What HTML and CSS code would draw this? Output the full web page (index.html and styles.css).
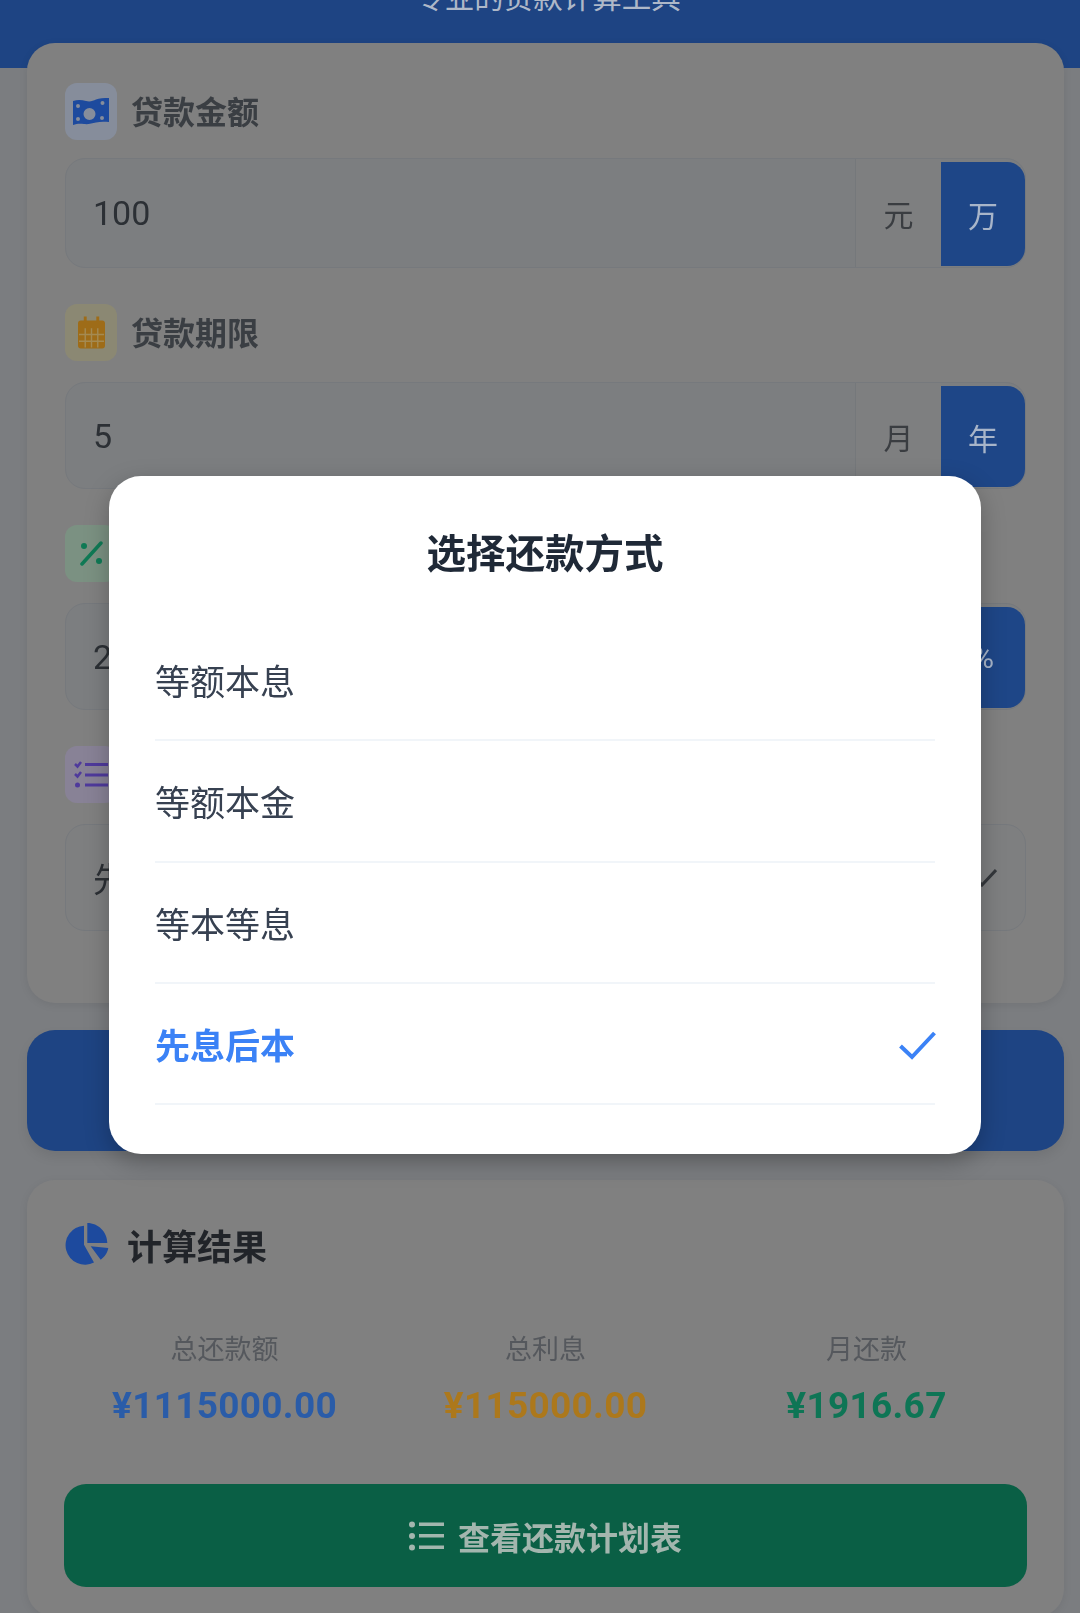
FILE: index.html
```html
<!DOCTYPE html>
<html lang="zh-CN">
<head>
  <meta charset="UTF-8">
  <title>贷款计算器</title>
  <link rel="stylesheet" href="styles.css">
</head>
<body>

  <header class="topbar">
    <p class="subtitle">专业的贷款计算工具</p>
  </header>

  <main class="page">
    <section class="card form">

      <div class="field first">
        <div class="label">
          <span class="badge badge-blue">
            <svg class="icon-money" viewBox="0 0 36 27"><path fill-rule="evenodd" fill="#1d4a9e" d="M0 3c5-1.500 9-1 13 0s7 0 10-1.500S31 0 36 0v24c-5-.5-9-.5-13 .5s-8 2-12 1.500-7-.5-11 1zM16.500 10a6 6 0 1 0 0 12 6 6 0 0 0 0-12zM5 6a2 2 0 1 0 0 4 2 2 0 0 0 0-4zm24 12a2 2 0 1 0 0 4 2 2 0 0 0 0-4zM29.500 3a2 2 0 1 0 0 4 2 2 0 0 0 0-4zM5 19a2 2 0 1 0 0 4 2 2 0 0 0 0-4z"/></svg>
          </span>
          <span class="label-text">贷款金额</span>
        </div>
        <div class="input">
          <span class="value">100</span>
          <span class="unit">元</span>
          <span class="unit on">万</span>
        </div>
      </div>

      <div class="field">
        <div class="label">
          <span class="badge badge-amber">
            <svg class="icon-cal" viewBox="0 0 28 33"><path fill="#9e6c18" d="M6 0h3v4h10V0h3v4h3a3 3 0 0 1 3 3v4H0V7a3 3 0 0 1 3-3h3zM0 11h28v19a3 3 0 0 1-3 3H3a3 3 0 0 1-3-3z"/><path stroke="#a48a52" stroke-width="1.500" d="M7.500 12v20M14 12v20M20.500 12v20M1 18.500h26M1 25.500h26"/></svg>
          </span>
          <span class="label-text">贷款期限</span>
        </div>
        <div class="input">
          <span class="value">5</span>
          <span class="unit">月</span>
          <span class="unit on">年</span>
        </div>
      </div>

      <div class="field">
        <div class="label">
          <span class="badge badge-green">
            <svg class="icon-pct" viewBox="0 0 25 25"><path stroke="#0f7a55" stroke-width="3.500" stroke-linecap="round" d="M22 2 3 23"/><circle cx="5" cy="5" r="3" fill="#0f7a55"/><circle cx="20" cy="20" r="3" fill="#0f7a55"/></svg>
          </span>
          <span class="label-text">年利率</span>
        </div>
        <div class="input">
          <span class="value">2.3</span>
          <span class="unit">‰</span>
          <span class="unit on">%</span>
        </div>
      </div>

      <div class="field">
        <div class="label">
          <span class="badge badge-purple">
            <svg class="icon-tasks" viewBox="0 0 34 27"><path fill="none" stroke="#4f3a9c" stroke-width="2.500" d="M1 3l2.500 2.500L7 1M1 13l2.500 2.500L7 11"/><circle cx="3.500" cy="24" r="2.500" fill="#4f3a9c"/><path stroke="#4f3a9c" stroke-width="3" d="M11 3.500h23M11 14h23M11 24h23"/></svg>
          </span>
          <span class="label-text">还款方式</span>
        </div>
        <div class="input select">
          <span class="value">先息后本</span>
          <svg class="chevron" viewBox="0 0 30 18"><path fill="none" stroke="#34373b" stroke-width="3" d="M1 1l14 15L29 1"/></svg>
        </div>
      </div>

    </section>

    <button class="calc">开始计算</button>

    <section class="card result">
      <div class="result-head">
        <svg class="icon-pie" viewBox="0 0 44 44"><path fill="#1d4a9e" d="M19 2.700a19.500 19.500 0 1 0 10 36.800L19 21.700zM22.300 0v20h20C42.300 9 33.300 0 22.300 0zM25.700 23.300l17.600 1.700c-.7 4.500-3.600 9-7.600 11.700z"/></svg>
        计算结果
      </div>
      <div class="stats">
        <div class="stat">
          <div class="stat-name">总还款额</div>
          <div class="stat-num num-blue">¥1115000.00</div>
        </div>
        <div class="stat">
          <div class="stat-name">总利息</div>
          <div class="stat-num num-amber">¥115000.00</div>
        </div>
        <div class="stat">
          <div class="stat-name">月还款</div>
          <div class="stat-num num-green">¥1916.67</div>
        </div>
      </div>
      <button class="plan">
        <svg class="icon-list" viewBox="0 0 35 30"><g fill="#a3b6ae"><circle cx="3" cy="3.500" r="3"/><circle cx="3" cy="15" r="3"/><circle cx="3" cy="26.500" r="3"/><rect x="10" y="1.500" width="25" height="3.500"/><rect x="10" y="13" width="25" height="3.500"/><rect x="10" y="24.500" width="25" height="3.500"/></g></svg>
        查看还款计划表
      </button>
    </section>
  </main>

  <!-- repayment picker, sits over the dimmed page -->
  <div class="modal">
    <h2 class="modal-title">选择还款方式</h2>
    <div class="option">等额本息</div>
    <div class="option">等额本金</div>
    <div class="option">等本等息</div>
    <div class="option picked">
      先息后本
      <svg class="check" viewBox="0 0 37 29"><path fill="none" stroke="#3b82f6" stroke-width="4" d="M1.500 15 13 26 35.500 2"/></svg>
    </div>
  </div>

</body>
</html>
```

FILE: styles.css
```css
/* colours below are already dimmed, the reference is behind a dark backdrop */
body {
  margin: 0;
  height: 1613px;
  overflow: hidden;
  position: relative;
  background-color: #7b7d80;
  color: #2f3338;
  font-family: Roboto, "Noto Sans CJK SC", sans-serif;
}

.topbar {
  height: 68px;
  background-color: #1e4483;
  display: flex;
  align-items: flex-end;
  justify-content: center;
  overflow: hidden;
}

.subtitle {
  margin: 0 0 53px;
  padding-left: 16px;
  font-size: 29.5px;
  line-height: 34px;
  color: #aeb8c8;
  white-space: nowrap;
}

.page {
  margin-top: -25px;
  padding: 0 16px 0 27px;
  display: flex;
  flex-direction: column;
  filter: blur(0.6px);
}

.card {
  position: relative;
  background-color: #808080;
  border-radius: 28px;
  box-shadow: 0 2px 8px rgba(0, 0, 0, 0.08);
}

.form {
  padding: 40px 38px 72px;
  display: flex;
  flex-direction: column;
  gap: 36px;
}

.field {
  display: flex;
  flex-direction: column;
  gap: 21px;
}

.label {
  display: flex;
  align-items: center;
  gap: 14px;
  font-size: 32px;
  font-weight: 700;
  color: #3a3e43;
}

.label-text {
  margin-top: -4px;
}

.badge {
  width: 52px;
  height: 57px;
  border-radius: 12px;
  display: flex;
  align-items: center;
  justify-content: center;
  flex: none;
}

.badge-blue { background-color: #868d9b; }
.badge-amber { background-color: #8b8873; }
.badge-green { background-color: #7b9182; }
.badge-purple { background-color: #888296; }

.icon-money { width: 36px; height: 27px; }
.icon-cal { width: 27px; height: 33px; }
.icon-pct { width: 25px; height: 25px; }
.icon-tasks { width: 34px; height: 27px; }

.input {
  height: 107px;
  box-sizing: border-box;
  border: 1px solid #76797d;
  border-radius: 20px;
  background-color: #7c7e80;
  display: flex;
  align-items: stretch;
}

/* first box sits a bit higher and taller in the reference */
.first {
  gap: 18px;
}

.first .input {
  height: 110px;
}

.value {
  flex: 1;
  padding-left: 27px;
  display: flex;
  align-items: center;
  font-size: 34px;
  color: #2c3035;
}

.unit {
  width: 85px;
  display: flex;
  align-items: center;
  justify-content: center;
  font-size: 30px;
  color: #3a3d41;
  border-left: 1px solid #75787b;
  background-color: #7e7f80;
}

.unit.on {
  width: 84px;
  margin: 3px 0 1px;
  border-left: 0;
  border-radius: 0 18px 18px 0;
  background-color: #1e4687;
  color: #a8b5c9;
}

.select {
  align-items: center;
  padding-right: 28px;
  background-color: #7e7f80;
}

.chevron {
  width: 30px;
  height: 18px;
}

.calc {
  margin-top: 27px;
  height: 121px;
  border: 0;
  border-radius: 28px;
  background-color: #1e4483;
  color: #a8b5c9;
  font-family: inherit;
  font-size: 34px;
  box-shadow: 0 6px 12px rgba(0, 0, 0, 0.08);
}

.result {
  margin-top: 29px;
  padding: 39px 37px 30px;
}

.result-head {
  display: flex;
  align-items: center;
  gap: 18px;
  padding-left: 1px;
  font-size: 35px;
  font-weight: 700;
  color: #212429;
}

.icon-pie {
  width: 44px;
  height: 44px;
}

.stats {
  margin-top: 62px;
  display: grid;
  grid-template-columns: repeat(3, 1fr);
  text-align: center;
}

.stat-name {
  font-size: 27px;
  line-height: 36px;
  color: #55585d;
}

.stat-num {
  margin-top: 16px;
  font-size: 37px;
  line-height: 44px;
  font-weight: 700;
  letter-spacing: 0.3px;
}

.num-blue { color: #2a5ca8; }
.num-amber { color: #ac781c; }
.num-green { color: #0e7555; }

.plan {
  width: 100%;
  margin-top: 56px;
  height: 103px;
  border: 0;
  border-radius: 22px;
  background-color: #0a5f45;
  color: #a3b6ae;
  font-family: inherit;
  font-size: 32px;
  font-weight: 700;
  display: flex;
  align-items: center;
  justify-content: center;
  gap: 14px;
}

.icon-list {
  width: 35px;
  height: 30px;
}

.modal {
  position: absolute;
  top: 476px;
  left: 109px;
  width: 872px;
  box-sizing: border-box;
  padding: 52px 46px 49px;
  background-color: white;
  border-radius: 32px;
  box-shadow: 0 8px 24px rgba(0, 0, 0, 0.25);
  filter: blur(0.5px);
}

.modal-title {
  margin: 0 0 38px;
  font-size: 39.5px;
  line-height: 54px;
  font-weight: 700;
  text-align: center;
  color: #1f2937;
}

.option {
  height: 121.3px;
  box-sizing: border-box;
  border-bottom: 2px solid #f1f5f9;
  display: flex;
  align-items: center;
  justify-content: space-between;
  font-size: 35px;
  color: #374151;
}

.picked {
  font-weight: 700;
  color: #3b82f6;
}

.check {
  width: 37px;
  height: 29px;
  margin: 3px -1px 0 0;
}
```
